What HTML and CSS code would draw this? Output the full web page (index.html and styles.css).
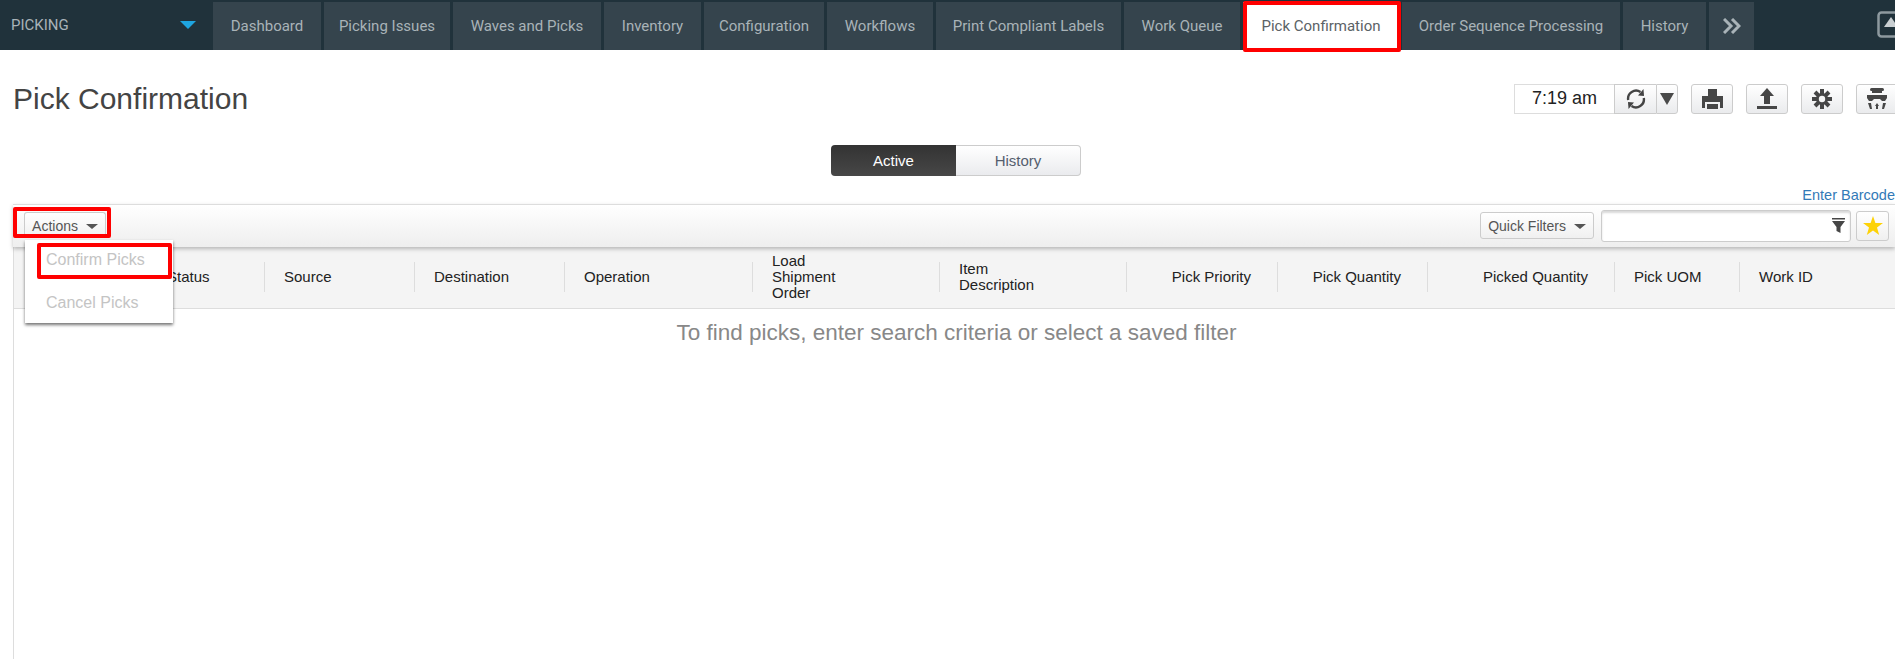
FILE: index.html
```html
<!DOCTYPE html>
<html lang="en">
<head>
    <meta charset="UTF-8">
    <title>Pick Confirmation</title>
    <link rel="stylesheet" href="styles.css">
</head>
<body>
    <nav class="topnav">
        <div class="app-select">
            <span>PICKING</span>
            <svg class="app-caret" width="16" height="8" viewBox="0 0 16 8"><polygon points="0,0 16,0 8,8" fill="#1ea5e0"/></svg>
        </div>
        <div class="tabs">
            <a class="tab">Dashboard</a>
            <a class="tab">Picking Issues</a>
            <a class="tab">Waves and Picks</a>
            <a class="tab">Inventory</a>
            <a class="tab">Configuration</a>
            <a class="tab">Workflows</a>
            <a class="tab">Print Compliant Labels</a>
            <a class="tab">Work Queue</a>
            <a class="tab tab-active">Pick Confirmation<span class="callout callout-tab"></span></a>
            <a class="tab">Order Sequence Processing</a>
            <a class="tab">History</a>
            <a class="tab">
                <svg width="18" height="16" viewBox="0 0 18 16"><path d="M1 1l7 7-7 7M9 1l7 7-7 7" fill="none" stroke="#a9b3b8" stroke-width="3"/></svg>
            </a>
        </div>
        <svg class="nav-user" width="30" height="27" viewBox="0 0 30 27"><rect x="1.5" y="1.5" width="36" height="24" rx="3" fill="none" stroke="#8d999f" stroke-width="2.5"/><polygon points="7,16 14,6 21,16" fill="#c9cfd2"/></svg>
    </nav>

    <header class="page-head">
        <h1>Pick Confirmation</h1>
        <div class="head-tools">
            <div class="time-group">
                <span class="time">7:19 am</span>
                <button class="tool tool-refresh">
                    <svg width="20" height="22" viewBox="0 0 20 22" fill="none" stroke="#444" stroke-width="2.4"><path d="M2.200 12A8 8 0 0 1 14.500 4"/><path d="M17.800 10A8 8 0 0 1 5.500 18"/><polygon points="17.500,1 18,8 12,7.500" fill="#444" stroke="none"/><polygon points="2.500,21 2,14 8,14.500" fill="#444" stroke="none"/></svg>
                </button>
                <button class="tool tool-caret">
                    <svg width="14" height="12" viewBox="0 0 14 12"><polygon points="0,0 14,0 7,12" fill="#4a4a4a"/></svg>
                </button>
            </div>
            <button class="tool tool-icon">
                <svg width="21" height="20" viewBox="0 0 21 20" fill="#464646"><rect x="6" y="0" width="9" height="8"/><path d="M0 7h21v12h-3v-6H3v6H0z"/><rect x="5" y="15" width="11" height="5"/></svg>
            </button>
            <button class="tool tool-icon">
                <svg width="22" height="22" viewBox="0 0 22 22" fill="#464646"><polygon points="11,0 18,8 14,8 14,16 8,16 8,8 4,8"/><rect x="1" y="18" width="20" height="3"/></svg>
            </button>
            <button class="tool tool-icon">
                <svg width="20" height="20" viewBox="0 0 20 20"><g stroke="#464646" stroke-width="4"><path d="M10 0v20M0 10h20M3 3l14 14M17 3L3 17"/></g><circle cx="10" cy="10" r="6" fill="#464646"/><circle cx="10" cy="10" r="3.2" fill="#f5f5f5"/></svg>
            </button>
            <button class="tool tool-icon">
                <svg width="20" height="22" viewBox="0 0 20 22" fill="#464646"><rect x="3" y="0" width="14" height="3" rx="1.5"/><rect x="5" y="3" width="10" height="2"/><path d="M0 7h20v3l-2 3h-3l-2-2H7l-2 2H2l-2-3z"/><path d="M1 15h3l1 6H3zM19 15h-3l-1 6h2zM10 15l2 3h-1v3H9v-3H8z"/></svg>
            </button>
        </div>
    </header>

    <div class="segment">
        <a class="seg seg-on">Active</a>
        <a class="seg">History</a>
    </div>

    <div class="barcode-row"><a class="barcode">Enter Barcode</a></div>

    <main class="panel">
        <div class="toolbar">
            <button class="btn btn-actions">Actions <i class="caret"></i><span class="callout callout-actions"></span></button>
            <div class="toolbar-right">
                <button class="btn btn-filters">Quick Filters <i class="caret"></i></button>
                <div class="search">
                    <svg width="13" height="15" viewBox="0 0 13 15" fill="#464646"><rect x="0" y="0" width="13" height="1.500"/><polygon points="0,3 13,3 8.500,9 8.500,15 4.500,13 4.500,9"/></svg>
                </div>
                <button class="btn-star">
                    <svg width="20" height="19" viewBox="0 0 20 19"><polygon points="10,0 12.400,6.900 20,7 14,11.600 16.200,19 10,14.600 3.800,19 6,11.600 0,7 7.600,6.900" fill="#fdd207"/></svg>
                </button>
            </div>
        </div>

        <div class="actions-menu">
            <a class="menu-item">Confirm Picks<span class="callout callout-confirm"></span></a>
            <a class="menu-item">Cancel Picks</a>
        </div>

        <div class="thead">
            <div class="th-cell"></div>
            <div class="th-cell"><span class="th">Status</span></div>
            <div class="th-cell"><span class="th">Source</span></div>
            <div class="th-cell"><span class="th">Destination</span></div>
            <div class="th-cell"><span class="th">Operation</span></div>
            <div class="th-cell"><span class="th">Load<br>Shipment<br>Order</span></div>
            <div class="th-cell"><span class="th">Item<br>Description</span></div>
            <div class="th-cell"><span class="th th-num">Pick Priority</span></div>
            <div class="th-cell"><span class="th th-num">Pick Quantity</span></div>
            <div class="th-cell"><span class="th th-num">Picked Quantity</span></div>
            <div class="th-cell"><span class="th">Pick UOM</span></div>
            <div class="th-cell"><span class="th">Work ID</span></div>
        </div>

        <p class="empty-msg">To find picks, enter search criteria or select a saved filter</p>
    </main>
</body>
</html>
```

FILE: styles.css
```css
html, body {
    height: 100%;
    overflow: hidden;
}
body {
    margin: 0;
    background: #fff;
    font-family: "Liberation Sans", Arial, sans-serif;
    font-size: 15px;
    color: #333;
}
button {
    font-family: inherit;
    cursor: pointer;
}

/* top nav */
.topnav {
    display: flex;
    height: 50px;
    background: #20323b;
    font-family: Roboto, sans-serif;
    font-size: 15px;
    color: #a9b3b8;
    position: relative;
}
.app-select {
    width: 213px;
    box-sizing: border-box;
    padding: 0 17px 0 11px;
    display: flex;
    align-items: center;
    justify-content: space-between;
}
.tabs {
    display: grid;
    grid-template-columns: 108px 126px 148px 97px 120px 106px 185px 116px 156px 218px 83px 45px;
    gap: 3px;
    padding-top: 2px;
}
.tab {
    display: flex;
    align-items: center;
    justify-content: center;
    white-space: nowrap;
    background: #35444d;
    position: relative;
}
.tab-active {
    background: #fff;
    color: #5b6266;
}
.nav-user {
    position: absolute;
    left: 1877px;
    top: 11px;
    overflow: visible;
}

/* red annotation boxes */
.callout {
    position: absolute;
    border: 4px solid #f00;
    border-radius: 2px;
    box-sizing: border-box;
    pointer-events: none;
}
.callout-tab {
    left: 0;
    right: -2px;
    top: -1px;
    bottom: -2px;
}
.callout-actions {
    left: -12px;
    right: -6px;
    top: -6px;
    bottom: 0;
}
.callout-confirm {
    left: 12px;
    right: 1px;
    top: 3px;
    bottom: 4px;
}

/* heading */
.page-head {
    display: flex;
    justify-content: space-between;
    height: 95px;
    padding-left: 13px;
    box-sizing: border-box;
}
h1 {
    margin: 30px 0 0;
    font-size: 30px;
    font-weight: normal;
    line-height: 38px;
    color: #444;
}
.head-tools {
    display: flex;
    gap: 13px;
    margin-top: 34px;
    margin-right: -3px;
    height: 30px;
}
.time-group {
    display: flex;
    margin-right: 0;
}
.time {
    width: 100px;
    box-sizing: border-box;
    border: 1px solid #ddd;
    border-right: none;
    line-height: 26px;
    text-align: center;
    font-size: 18px;
    color: #222;
}
.tool {
    padding: 0;
    border: 1px solid #ccc;
    background: linear-gradient(#fff, #eaebed);
    display: flex;
    align-items: center;
    justify-content: center;
}
.tool-refresh {
    width: 42px;
    border-right: none;
}
.tool-caret {
    width: 22px;
    border-radius: 0 3px 3px 0;
}
.tool-icon {
    width: 42px;
    border-radius: 3px;
}

/* active / history switch */
.segment {
    display: flex;
    justify-content: center;
    height: 31px;
    padding-left: 17px;
}
.seg {
    width: 125px;
    box-sizing: border-box;
    display: flex;
    align-items: center;
    justify-content: center;
    border: 1px solid #ccc;
    border-left: none;
    border-radius: 0 4px 4px 0;
    background: linear-gradient(#fff, #eaebee);
    color: #555e6e;
}
.seg-on {
    border: none;
    border-radius: 4px 0 0 4px;
    background: linear-gradient(#333, #474747);
    color: #fff;
}

.barcode-row {
    display: flex;
    justify-content: flex-end;
    height: 28px;
    line-height: 38px;
    font-size: 14.5px;
    white-space: nowrap;
}
.barcode {
    color: #337ab7;
}

/* main panel */
.panel {
    margin-left: 13px;
    border-left: 1px solid #ddd;
    height: 455px;
    position: relative;
}
.toolbar {
    height: 43px;
    box-sizing: border-box;
    border-top: 1px solid #ddd;
    background: linear-gradient(#fff, #eee);
    box-shadow: 0 2px 4px rgba(0, 0, 0, 0.25);
    display: flex;
    justify-content: space-between;
    position: relative;
    margin-left: -1px;
}
.btn {
    height: 26px;
    padding: 0;
    border: 1px solid #ccc;
    border-radius: 3px;
    background: linear-gradient(#fff, #f0f0f0);
    font-size: 14px;
    color: #555;
}
.btn-actions {
    width: 82px;
    margin: 7px 0 0 11px;
    border-bottom: none;
    position: relative;
}
.caret {
    display: inline-block;
    width: 0;
    height: 0;
    margin-left: 4px;
    vertical-align: 2px;
    border-left: 6px solid transparent;
    border-right: 6px solid transparent;
    border-top: 5px solid #555;
}
.toolbar-right {
    display: flex;
    padding-top: 5px;
    margin-right: 6px;
}
.btn-filters {
    width: 114px;
    height: 27px;
    margin-top: 2px;
}
.search {
    width: 250px;
    height: 32px;
    margin-left: 7px;
    box-sizing: border-box;
    border: 1px solid #ccc;
    border-radius: 3px;
    box-shadow: inset 0 2px 2px rgba(0, 0, 0, 0.15);
    display: flex;
    justify-content: flex-end;
    padding: 7px 5px 0 0;
    background: #fff;
}
.btn-star {
    width: 33px;
    height: 30px;
    margin: 1px 0 0 5px;
    padding: 2px 0 0;
    border: 1px solid #ccc;
    border-radius: 3px;
    background: linear-gradient(#fff, #f0f0f0);
}
.actions-menu {
    position: absolute;
    left: 11px;
    top: 36px;
    width: 148px;
    height: 83px;
    background: #fff;
    box-shadow: 0 2px 3px rgba(0, 0, 0, 0.55);
    z-index: 2;
    color: #c4c4c4;
}
.menu-item {
    display: block;
    position: relative;
    height: 43px;
    line-height: 40px;
    padding-left: 21px;
    font-size: 16px;
}
.thead {
    display: grid;
    grid-template-columns: 133px 117px 150px 150px 188px 187px 187px 151px 150px 187px 125px 1fr;
    height: 62px;
    box-sizing: border-box;
    padding-top: 15px;
    background: #f4f4f4;
    border-bottom: 1px solid #ddd;
}
.th-cell {
    height: 30px;
    border-left: 1px solid #ddd;
    display: flex;
    align-items: center;
    padding: 0 19px;
    line-height: 16px;
    color: #222;
    white-space: nowrap;
}
.th-cell:first-child {
    border-left: none;
}
.th-cell:has(.th-num) {
    justify-content: flex-end;
    padding-right: 26px;
}
.empty-msg {
    margin: 11px 0 0;
    padding-left: 4px;
    text-align: center;
    font-size: 22.5px;
    color: #888;
}
```
